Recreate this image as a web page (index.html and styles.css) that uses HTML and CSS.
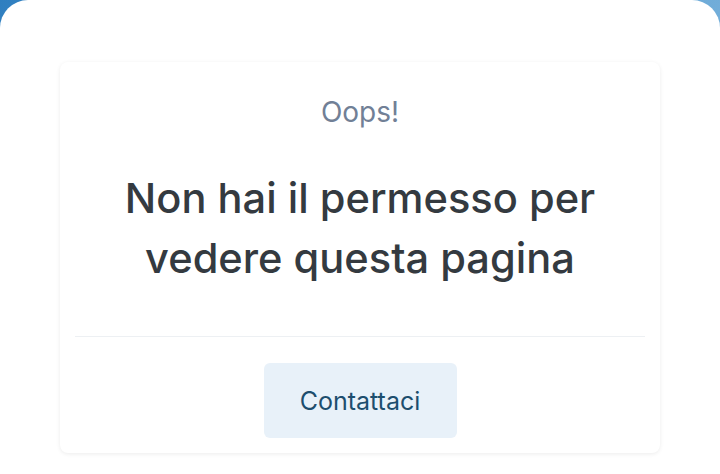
FILE: index.html
```html
<!DOCTYPE html>
<html lang="it">
<head>
    <meta charset="UTF-8">
    <meta name="viewport" content="width=device-width, initial-scale=1.0">
    <title>Accesso negato</title>
    <link rel="stylesheet" href="styles.css">
</head>
<body>

    <div class="page">
        <div class="card">
            <p class="oops">Oops!</p>
            <h1 class="title">Non hai il permesso per vedere questa pagina</h1>
            <div class="card-footer">
                <button class="contact-btn">Contattaci</button>
            </div>
        </div>
    </div>

</body>
</html>
```

FILE: styles.css
```css
html, body { margin: 0; padding: 0; }
body { font-family: Inter, "Noto Sans", sans-serif; background: linear-gradient(135deg, #2f7fc0, #9ccbe9); height: 474px; overflow: hidden; }
.page { background: #fff; border-radius: 28px 28px 0 0; height: 100%; padding: 62px 60px 0; box-sizing: border-box; }
.card { background: #fff; border-radius: 8px; box-shadow: 0 1px 4px rgba(0, 0, 0, 0.08); padding: 0 15px; text-align: center; }
.oops { margin: 0; padding-top: 32px; font-size: 28px; line-height: 36px; color: #718096; }
.title { margin: 0; padding: 38px 40px 48px; font-size: 41.6px; font-weight: 500; line-height: 60px; color: #343a40; }
.card-footer { border-top: 1px solid #edf0f3; padding: 26px 0 15px; }
.contact-btn { font-family: inherit; font-size: 25px; color: #1d4e6e; background: #e8f1f9; border: none; border-radius: 6px; width: 193px; height: 75px; cursor: pointer; }
```
